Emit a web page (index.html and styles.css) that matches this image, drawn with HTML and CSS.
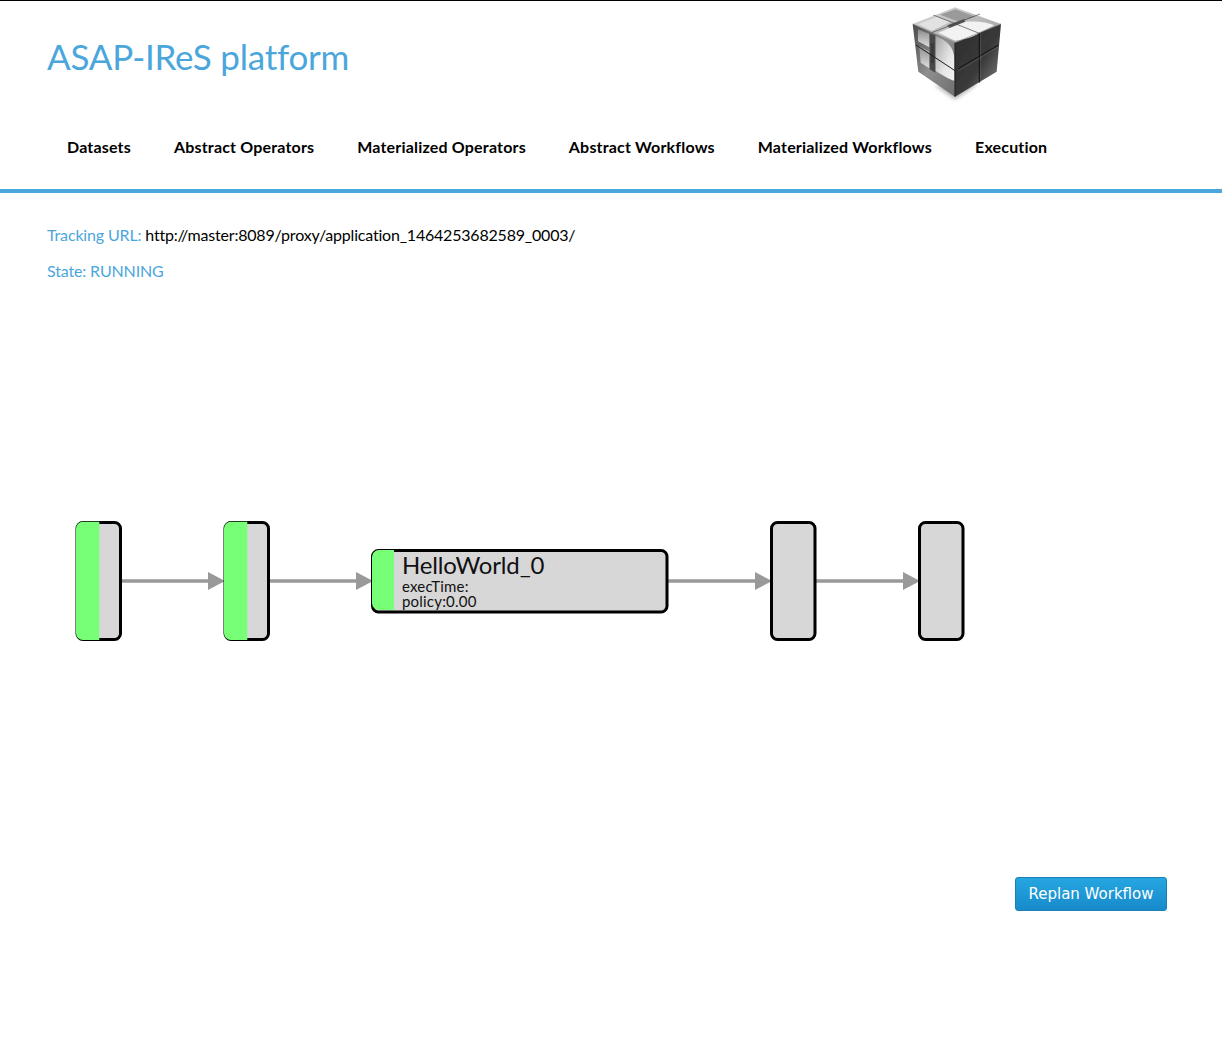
FILE: index.html
```html
<!DOCTYPE html>
<html>

<head>
    <title>ASAP-IReS platform</title>
    <link rel="stylesheet" href="styles.css">
</head>

<body>
    <header class="header">
        <div class="topRow">
            <h1 class="siteTitle">ASAP-IReS platform</h1>
            <svg class="logo" width="130" height="110" viewBox="0 0 390 330">
                <defs>
                    <linearGradient id="cubeLeft" x1="0" y1="0" x2="1" y2="1">
                        <stop offset="0" stop-color="#4a4a4a" />
                        <stop offset="0.5" stop-color="#8e8e8e" />
                        <stop offset="1" stop-color="#6e6e6e" />
                    </linearGradient>
                    <linearGradient id="cubeRight" x1="0" y1="0" x2="1" y2="1">
                        <stop offset="0" stop-color="#2b2b2b" />
                        <stop offset="0.55" stop-color="#3a3a3a" />
                        <stop offset="1" stop-color="#8c8c8c" />
                    </linearGradient>
                    <linearGradient id="cubeTop" x1="0" y1="0" x2="1" y2="1">
                        <stop offset="0" stop-color="#dcdcdc" />
                        <stop offset="1" stop-color="#9c9c9c" />
                    </linearGradient>
                    <linearGradient id="cubePane" x1="0" y1="0" x2="0" y2="1">
                        <stop offset="0" stop-color="#8c8c8c" />
                        <stop offset="1" stop-color="#dedede" />
                    </linearGradient>
                    <linearGradient id="cubeShape" x1="0" y1="0" x2="1" y2="1">
                        <stop offset="0" stop-color="#a4a4a4" />
                        <stop offset="0.6" stop-color="#e6e6e6" />
                        <stop offset="1" stop-color="#f4f4f4" />
                    </linearGradient>
                    <filter id="cubeShadow" x="-30%" y="-30%" width="160%" height="160%"><feGaussianBlur stdDeviation="7" /></filter>
                    <filter id="cubeSoft"><feGaussianBlur stdDeviation="1" /></filter>
                </defs>
                <polygon points="135,255 195,298 265,250" fill="#aaa" filter="url(#cubeShadow)" />
                <g filter="url(#cubeSoft)">
                    <polygon points="68,72 195,22 333,72 195,128" fill="url(#cubeTop)" />
                    <polygon points="68,72 195,128 195,290 85,215" fill="url(#cubeLeft)" />
                    <polygon points="195,128 333,72 320,215 195,290" fill="url(#cubeRight)" />

                    <polygon points="85,72 142,50 180,66 125,92" fill="#e2e2e2" />
                    <polygon points="150,44 196,28 256,50 210,66" fill="#9a9a9a" />
                    <path d="M145,98 L222,66 C262,62 296,68 312,76 L268,98 C250,112 222,118 195,122 Z" fill="#f2f2f2" />
                    <polygon points="172,76 222,57 226,65 178,84" fill="#555" />

                    <polygon points="84,88 118,102 118,142 84,124" fill="url(#cubePane)" />
                    <polygon points="88,138 118,154 118,205 92,188" fill="url(#cubePane)" />
                    <path d="M136,108 C172,122 192,140 193,180 L193,242 C178,238 158,226 136,212 Z" fill="url(#cubeShape)" />
                    <polygon points="119,100 136,106 136,218 119,208" fill="#4a4a4a" />
                    <rect x="122" y="130" width="10" height="60" fill="#3a3a3a" />

                    <path d="M68,72 L195,128 L333,72" fill="none" stroke="#777" stroke-width="2" />
                    <path d="M130,45 L268,100 M125,98 L270,42" fill="none" stroke="#444" stroke-width="2" />
                    <path d="M268,100 V248 M205,206 L325,135" fill="none" stroke="#111" stroke-width="3" />
                    <path d="M272,100 V246 M205,212 L325,141" fill="none" stroke="#6a6a6a" stroke-width="1.500" />
                    <path d="M195,128 V290 M78,135 L195,212" fill="none" stroke="#1c1c1c" stroke-width="3" />
                </g>
            </svg>
        </div>
        <nav class="mainNav">
            <a href="#">Datasets</a>
            <a href="#">Abstract Operators</a>
            <a href="#">Materialized Operators</a>
            <a href="#">Abstract Workflows</a>
            <a href="#">Materialized Workflows</a>
            <a href="#">Execution</a>
        </nav>
    </header>

    <main class="content">
        <p class="info">Tracking URL: <a href="#">http://master:8089/proxy/application_1464253682589_0003/</a></p>
        <p class="info">State: RUNNING</p>

        <svg class="graph" width="1222" height="580" viewBox="0 0 1222 580">
            <g class="edge">
                <line x1="121" y1="284" x2="210" y2="284" />
                <polygon points="208,275 225,284 208,293" />
                <line x1="269" y1="284" x2="358" y2="284" />
                <polygon points="356,275 373,284 356,293" />
                <line x1="667" y1="284" x2="757" y2="284" />
                <polygon points="755,275 772,284 755,293" />
                <line x1="815" y1="284" x2="905" y2="284" />
                <polygon points="903,275 920,284 903,293" />
            </g>

            <rect class="node" x="77" y="225.500" width="43.500" height="117" rx="6" />
            <path class="done" d="M99.300,224.700 H83 A7,7 0 0 0 76,231.700 V336 A7,7 0 0 0 83,343 H99.300 Z" />
            <rect class="node" x="225" y="225.500" width="43.500" height="117" rx="6" />
            <path class="done" d="M247.300,224.700 H231 A7,7 0 0 0 224,231.700 V336 A7,7 0 0 0 231,343 H247.300 Z" />

            <rect class="node" x="372.500" y="253.500" width="294.500" height="61.500" rx="6" />
            <path class="done" d="M394,253 H379 A7,7 0 0 0 372,260 V306 A7,7 0 0 0 379,313 H394 Z" />
            <text class="nodeTitle" x="402" y="277">HelloWorld_0</text>
            <text class="nodeText" x="402" y="295">execTime:</text>
            <text class="nodeText" x="402" y="310">policy:0.00</text>

            <rect class="node" x="771.500" y="225.500" width="43.500" height="117" rx="6" />
            <rect class="node" x="919.500" y="225.500" width="43.500" height="117" rx="6" />
        </svg>

        <div class="actions">
            <button class="replanBtn">Replan Workflow</button>
        </div>
    </main>
</body>

</html>
```

FILE: styles.css
```css
body {
    margin: 0;
    background-color: white;
    font-family: "Lato", sans-serif;
    font-size: 16px;
    font-variant-ligatures: none;
    color: #000;
    border-top: 1px solid #000;
}

.header {
    border-bottom: 4px solid #4ba6dc;
}

.topRow {
    height: 136px;
    padding-left: 47px;
    display: flex;
    align-items: flex-start;
    position: relative;
}

.siteTitle {
    margin: 34px 0 0 0;
    font-size: 35px;
    line-height: 42px;
    font-weight: 400;
    letter-spacing: -0.23px;
    color: #4ba6dc;
}

.logo {
    position: absolute;
    left: 890px;
    top: -1px;
}

.mainNav {
    display: flex;
    gap: 43px;
    padding: 0 0 14px 67px;
    height: 38px;
    box-sizing: content-box;
}

.mainNav a {
    color: #000;
    font-weight: 700;
    text-decoration: none;
    line-height: 20px;
    letter-spacing: 0.18px;
}

.content {
    padding: 32px 0 0 0;
}

.info {
    margin: 0 0 16px 47px;
    line-height: 20px;
    color: #4ba6dc;
    letter-spacing: -0.15px;
}

.info a {
    color: #000;
    text-decoration: none;
    letter-spacing: -0.2px;
}

.graph {
    display: block;
}

.edge line {
    stroke: #999;
    stroke-width: 3.4;
}

.edge polygon {
    fill: #999;
}

.node {
    fill: #d7d7d7;
    stroke: #000;
    stroke-width: 3;
}

.done {
    fill: #78ff78;
}

.nodeTitle {
    font-family: "Lato", sans-serif;
    font-size: 24px;
    letter-spacing: -0.15px;
    fill: #111;
}

.nodeText {
    font-family: "Lato", sans-serif;
    font-size: 15px;
    letter-spacing: 0.2px;
    fill: #111;
}

.actions {
    display: flex;
    justify-content: flex-end;
    padding-right: 55px;
}

.replanBtn {
    width: 152px;
    height: 34px;
    padding: 0;
    border: 1px solid #1a80b6;
    border-radius: 3px;
    background: linear-gradient(#25a6e1, #188acb);
    color: #fff;
    font-family: "DejaVu Sans", sans-serif;
    font-size: 15px;
}
```
